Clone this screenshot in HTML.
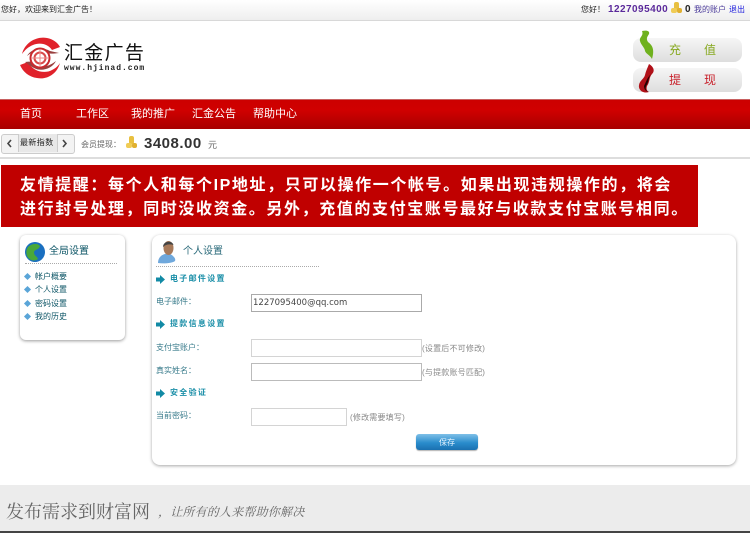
<!DOCTYPE html>
<html><head><meta charset="utf-8"><style>
html,body{margin:0;padding:0;background:#fff}
body{width:750px;height:533px;position:relative;overflow:hidden;font-family:"Liberation Sans","WenQuanYi Zen Hei","Noto Sans CJK SC",sans-serif;font-size:8px;color:#333}
.a{position:absolute;white-space:nowrap;line-height:1}
.nav{color:#fff;font-size:11px;top:109px}
.side{left:35px;font-size:8px;color:#0c5566}
.bl{left:25px;width:5px;height:5px;background:#5aa5d8;transform:rotate(45deg)}
.h{color:#1b8fa8;font-weight:bold;font-size:8px;letter-spacing:1.3px;left:170px}
.l{left:156px;color:#3a7c8c;font-size:8px;letter-spacing:0}
.i{position:absolute;box-sizing:border-box;background:#fff;border:1px solid #d4d4d4;height:18px;left:251px}
.n{color:#888;font-size:8px;letter-spacing:.2px}
.pill{position:absolute;left:633px;width:109px;height:24px;border-radius:8px;background:linear-gradient(#f6f6f6,#dedede);border:0}
</style></head><body>
<div class="a" style="left:0;top:0;width:750px;height:20px;background:linear-gradient(#fff,#eeeeee);border-bottom:1px solid #d8d8d8"></div>
<div class="a" style="left:1px;top:6px;font-size:8px;color:#222">您好，欢迎来到汇金广告！</div>
<div class="a" style="left:581px;top:6px;font-size:8px;color:#222">您好！</div>
<div class="a" style="left:608px;top:5px;font-size:10px;font-weight:bold;color:#5b2a9b;letter-spacing:.45px">1227095400</div>
<svg class="a" style="left:671px;top:2px" width="12" height="12"><rect x="3" y="0" width="5" height="8" rx="2" fill="#e8c040"/><rect x="0" y="6" width="6" height="5" rx="2" fill="#f0cc55"/><rect x="6" y="6" width="5" height="5" rx="2" fill="#e0b030"/></svg>
<div class="a" style="left:685px;top:5px;font-size:10px;font-weight:bold;color:#222">0</div>
<div class="a" style="left:694px;top:6px;font-size:8px;color:#4a3a9a">我的账户</div>
<div class="a" style="left:729px;top:6px;font-size:8px;color:#2222dd">退出</div>

<svg class="a" style="left:19px;top:36px" width="44" height="44" viewBox="0 0 44 44">
<path d="M3 18C6 6 18 0 28 2C34 3 39 7 41 11L33 14C29 8 21 6 14 9C9 11 6 14 3 18Z" fill="#e0222b"/>
<path d="M8 20C12 13 22 10 31 15L40 17C33 18 28 18 25 16C18 14 13 16 8 20Z" fill="#99403f"/>
<path d="M1 29L9 26C14 36 26 38 33 34C37 32 39 30 41 27C38 38 28 44 18 42C10 41 4 36 1 29Z" fill="#e0222b"/>
<path d="M6 26C12 25 16 26 19 29C26 32 32 29 37 25C33 33 22 36 15 32C11 30 9 28 6 26Z" fill="#99403f"/>
<circle cx="21" cy="22" r="9.5" fill="#fff" stroke="#c92a2e" stroke-width="2"/>
<circle cx="21" cy="22" r="5.5" fill="#fff" stroke="#d84a4a" stroke-width="2"/>
<path d="M12 22H30M21 13V31" stroke="#e88" stroke-width="1"/>
</svg>
<div class="a" style="left:64px;top:44px;font-size:19px;letter-spacing:1.3px;color:#111">汇金广告</div>
<div class="a" style="left:64px;top:65px;font-size:8px;font-family:'Liberation Mono',monospace;font-weight:bold;color:#222;letter-spacing:1px">www.hjinad.com</div>

<div class="pill" style="top:38px"></div>
<div class="pill" style="top:68px"></div>
<svg class="a" style="left:638px;top:30px" width="18" height="30"><path d="M4 1C9 0 12 1 11 4C9 7 8 9 10 12C14 15 17 19 14 29C12 25 8 24 7 21C7 18 3 15 2 11C1 7 6 6 4 1Z" fill="#6fb11e"/></svg>
<svg class="a" style="left:638px;top:64px" width="18" height="30"><path d="M11 0C16 3 17 7 14 10C11 13 12 18 9 22C8 25 9 27 11 28C5 30 0 26 1 21C2 16 6 15 7 11C8 7 9 5 11 0Z" fill="#b01018"/><path d="M13 10C10 14 11 18 8 22C7 25 8 27 11 28C9 28 6 26 6 22C8 18 9 14 13 10Z" fill="#200"/></svg>
<div class="a" style="left:669px;top:44px;font-size:12px;color:#86a81e">充</div>
<div class="a" style="left:704px;top:44px;font-size:12px;color:#86a81e">值</div>
<div class="a" style="left:669px;top:74px;font-size:12px;color:#c8202a">提</div>
<div class="a" style="left:704px;top:74px;font-size:12px;color:#c8202a">现</div>

<div class="a" style="left:0;top:99px;width:750px;height:30px;background:linear-gradient(#cc0000 0,#d00000 35%,#a80000 100%);border-top:1px solid #c86060;box-sizing:border-box"></div>
<div class="a nav" style="left:20px">首页</div>
<div class="a nav" style="left:76px">工作区</div>
<div class="a nav" style="left:131px">我的推广</div>
<div class="a nav" style="left:192px">汇金公告</div>
<div class="a nav" style="left:253px">帮助中心</div>

<div class="a" style="left:1px;top:134px;width:72px;height:18px;border:1px solid #ccc;border-radius:3px;background:#f3f3f3"></div>
<div class="a" style="left:18px;top:134px;width:38px;height:18px;border-left:1px solid #ccc;border-right:1px solid #ccc;background:#e8e8e8"></div>
<svg class="a" style="left:6px;top:139px" width="8" height="9"><path d="M5 1L2 4.5L5 8" fill="none" stroke="#444" stroke-width="1.6"/></svg>
<svg class="a" style="left:61px;top:139px" width="8" height="9"><path d="M2 1L5 4.5L2 8" fill="none" stroke="#444" stroke-width="1.6"/></svg>
<div class="a" style="left:20px;top:139px;font-size:8px;letter-spacing:.4px;color:#222">最新指数</div>
<div class="a" style="left:81px;top:141px;font-size:8px;color:#666">会员提现：</div>
<svg class="a" style="left:125px;top:136px" width="13" height="13"><rect x="4" y="0" width="5" height="8" rx="2" fill="#e8c040"/><rect x="1" y="7" width="6" height="5" rx="2" fill="#f0cc55"/><rect x="7" y="7" width="5" height="5" rx="2" fill="#e0b030"/></svg>
<div class="a" style="left:144px;top:136px;font-size:15px;font-weight:bold;color:#333;letter-spacing:.5px;font-family:'Liberation Sans',sans-serif">3408.00</div>
<div class="a" style="left:208px;top:141px;font-size:9px;color:#666">元</div>
<div class="a" style="left:0;top:157px;width:750px;height:2px;background:#ddd"></div>

<div class="a" style="left:1px;top:165px;width:697px;height:62px;background:#c00000"></div>
<div class="a" style="left:20px;top:178px;font-size:16px;font-weight:bold;letter-spacing:1.6px;color:#fff">友情提醒：每个人和每个IP地址，只可以操作一个帐号。如果出现违规操作的，将会</div>
<div class="a" style="left:20px;top:202px;font-size:16px;font-weight:bold;letter-spacing:1.6px;color:#fff">进行封号处理，同时没收资金。另外，充值的支付宝账号最好与收款支付宝账号相同。</div>

<div class="a" style="left:20px;top:235px;width:105px;height:105px;background:#fff;border-radius:6px;box-shadow:0 1px 3px rgba(0,0,0,.4)"></div>
<svg class="a" style="left:25px;top:242px" width="20" height="20"><circle cx="10" cy="10" r="10" fill="#1a6fc0"/><path d="M3 5C7 1 13 1 15 4C14 8 10 7 9 10C9 14 12 14 13 17C9 20 4 18 2 14C1 11 1 8 3 5Z" fill="#4aa83a"/></svg>
<div class="a" style="left:49px;top:247px;font-size:10px;color:#0c5566">全局设置</div>
<div class="a" style="left:25px;top:263px;width:92px;border-top:1px dotted #aaa"></div>
<div class="a bl" style="top:273.5px"></div><div class="a side" style="top:273px">帐户概要</div>
<div class="a bl" style="top:286.5px"></div><div class="a side" style="top:286px">个人设置</div>
<div class="a bl" style="top:300.5px"></div><div class="a side" style="top:300px">密码设置</div>
<div class="a bl" style="top:313.5px"></div><div class="a side" style="top:313px">我的历史</div>

<div class="a" style="left:152px;top:235px;width:584px;height:230px;background:#fff;border-radius:8px;box-shadow:0 1px 3px rgba(0,0,0,.35)"></div>
<svg class="a" style="left:158px;top:240px" width="20" height="24"><path d="M0 23C0 18 3 15 7 14L12 14C16 16 18 19 17 21C15 23 6 24 0 23Z" fill="#6fa8dc"/><ellipse cx="10.5" cy="8" rx="5" ry="7" fill="#a87a5a"/><path d="M5 7C5 1 14 0 15.5 5C12 4 8 4 5 7Z" fill="#444"/></svg>
<div class="a" style="left:183px;top:247px;font-size:10px;color:#2a6a7a">个人设置</div>
<div class="a" style="left:156px;top:266px;width:163px;border-top:1px dotted #aaa"></div>

<svg class="a" style="left:156px;top:275px" width="9" height="9"><path d="M0 2.5H4V0L9 4.5L4 9V6.5H0Z" fill="#128aa5"/></svg>
<div class="a h" style="top:275px">电子邮件设置</div>
<div class="a l" style="top:298px">电子邮件：</div>
<div class="i" style="top:294px;width:171px;border-color:#aaa;font-size:8.5px;line-height:17px;padding-left:1px;color:#444;letter-spacing:0;font-family:'DejaVu Sans',sans-serif;overflow:hidden;white-space:nowrap">1227095400@qq.com</div>

<svg class="a" style="left:156px;top:320px" width="9" height="9"><path d="M0 2.5H4V0L9 4.5L4 9V6.5H0Z" fill="#128aa5"/></svg>
<div class="a h" style="top:320px">提款信息设置</div>
<div class="a l" style="top:344px">支付宝账户：</div>
<div class="i" style="top:339px;width:171px"></div>
<div class="a n" style="left:422px;top:345px">(设置后不可修改)</div>
<div class="a l" style="top:367px">真实姓名：</div>
<div class="i" style="top:363px;width:171px;border-color:#bbb"></div>
<div class="a n" style="left:422px;top:369px">(与提款账号匹配)</div>

<svg class="a" style="left:156px;top:389px" width="9" height="9"><path d="M0 2.5H4V0L9 4.5L4 9V6.5H0Z" fill="#128aa5"/></svg>
<div class="a h" style="top:389px">安全验证</div>
<div class="a l" style="top:412px">当前密码：</div>
<div class="i" style="top:408px;width:96px"></div>
<div class="a n" style="left:350px;top:414px">(修改需要填写)</div>
<div class="a" style="left:416px;top:434px;width:62px;height:16px;border-radius:3px;background:linear-gradient(#7fc0e8,#2a8ccc 55%,#1a70b0);box-shadow:0 1px 1px rgba(0,0,0,.3);color:#e8f4ff;font-size:8px;text-align:center;line-height:17px">保存</div>

<div class="a" style="left:0;top:485px;width:750px;height:46px;background:#ececec"></div>
<div class="a" style="left:0;top:531px;width:750px;height:2px;background:#444"></div>
<div class="a" style="left:6px;top:503px;font-size:18px;color:#666;font-family:'Liberation Serif','Noto Serif CJK SC',serif">发布需求到财富网</div>
<div class="a" style="left:158px;top:506px;font-size:12px;letter-spacing:.2px;font-style:italic;color:#666;font-family:'Liberation Serif','Noto Serif CJK SC',serif">，让所有的人来帮助你解决</div>
</body></html>
